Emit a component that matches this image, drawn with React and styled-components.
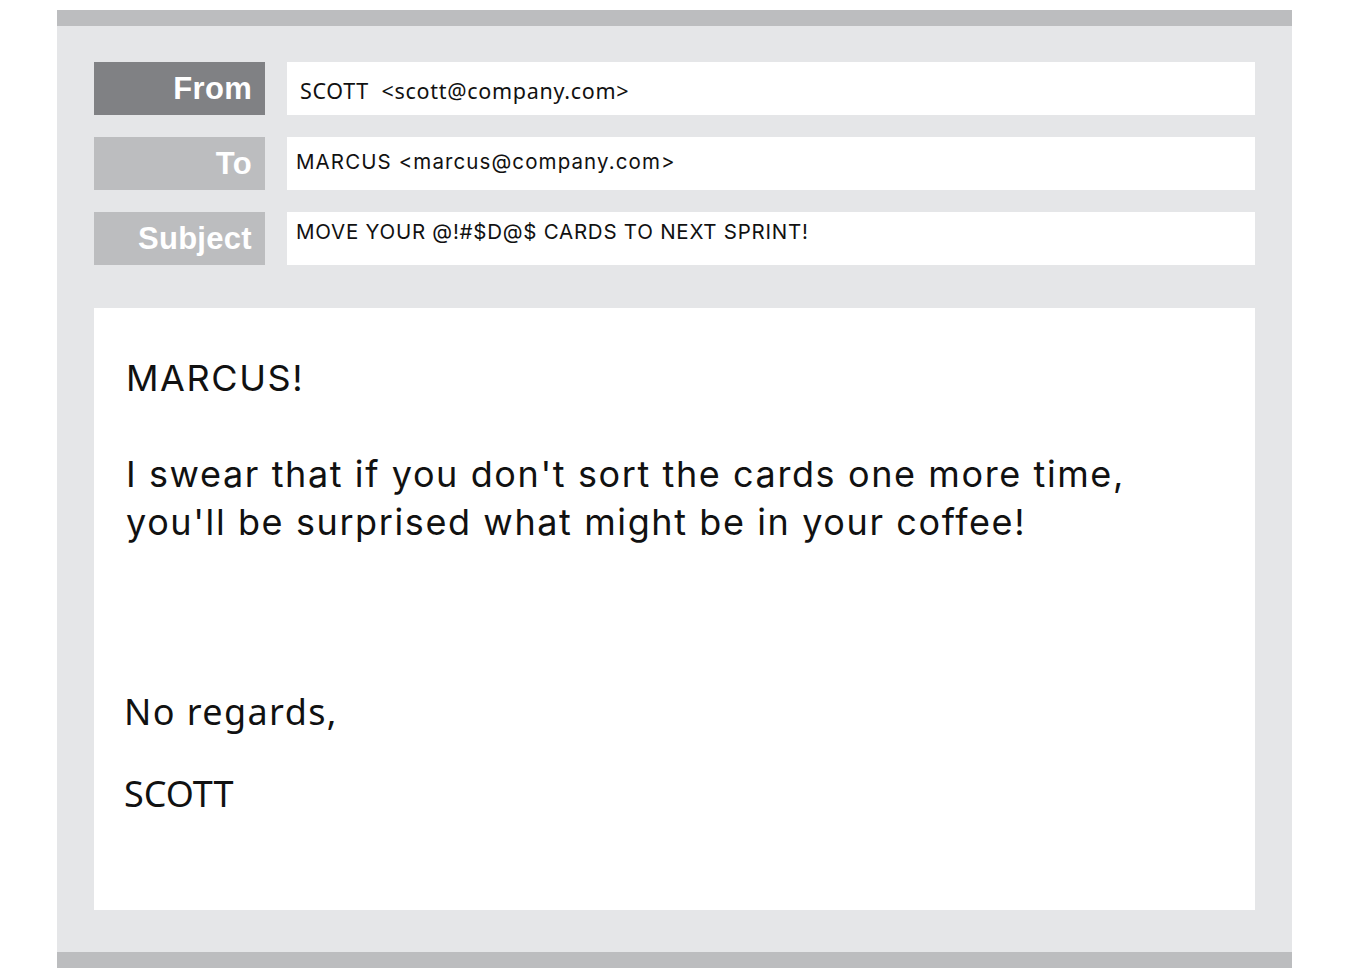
import React from 'react';
import styled, { createGlobalStyle } from 'styled-components';

const Global = createGlobalStyle`
  body {
    margin: 0;
    background: #fff;
  }
`;

const Page = styled.div`
  padding: 10px 58px 10px 57px;
`;

const Frame = styled.div`
  background: #e5e6e8;
  border-top: 16px solid #bcbdbf;
  border-bottom: 16px solid #bcbdbf;
  padding: 36px 37px 42px;
`;

const Header = styled.div`
  display: flex;
  flex-direction: column;
  gap: 22px;
  padding-bottom: 43px;
`;

const Row = styled.div`
  display: flex;
  height: 53px;
  gap: 22px;
`;

const Label = styled.div`
  width: 171px;
  flex-shrink: 0;
  background: ${p => (p.active ? '#808184' : '#bcbdbf')};
  color: #fff;
  font-family: "Liberation Sans", Arial, sans-serif;
  font-weight: bold;
  font-size: 31px;
  letter-spacing: 0.3px;
  text-align: right;
  padding: 0 13px;
  box-sizing: border-box;
  line-height: 53px;
`;

const Field = styled.div`
  flex: 1;
  background: #fff;
  color: #111;
  white-space: nowrap;
  font-family: Inter, sans-serif;
  font-size: 20.5px;
  letter-spacing: ${p => p.spacing || 0.75}px;
  padding: 0 9px;
  line-height: ${p => (p.top ? '40px' : '49px')};
`;

const SenderField = styled(Field)`
  font-family: "Noto Sans", sans-serif;
  font-size: 21.5px;
  letter-spacing: 0.7px;
  padding: 0 13px;
  line-height: 58px;
`;

const Body = styled.div`
  background: #fff;
  height: 602px;
  padding: 46px 32px 0;
  box-sizing: border-box;
  color: #111;
`;

const Para = styled.p`
  margin: 0 0 ${p => p.gap || 0}px;
  font-family: Inter, sans-serif;
  font-size: 36px;
  letter-spacing: 1.6px;
  line-height: 48px;
`;

const Sign = styled(Para)`
  font-family: "Noto Sans", sans-serif;
  letter-spacing: ${p => p.spacing || 0}px;
  margin-left: -2px;
`;

export default function App() {
  return (
    <>
      <Global />
      <Page>
        <Frame>
          <Header>
            <Row>
              <Label active>From</Label>
              <SenderField>SCOTT&nbsp; &lt;scott@company.com&gt;</SenderField>
            </Row>
            <Row>
              <Label>To</Label>
              <Field spacing={1.1}>MARCUS &lt;marcus@company.com&gt;</Field>
            </Row>
            <Row>
              <Label>Subject</Label>
              <Field top>MOVE YOUR @!#$D@$ CARDS TO NEXT SPRINT!</Field>
            </Row>
          </Header>
          <Body>
            <Para gap={48}>MARCUS!</Para>
            <Para gap={142}>
              I swear that if you don't sort the cards one more time,
              <br />
              you'll be surprised what might be in your coffee!
            </Para>
            <Sign spacing={1.4} gap={34}>No regards,</Sign>
            <Sign>SCOTT</Sign>
          </Body>
        </Frame>
      </Page>
    </>
  );
}
